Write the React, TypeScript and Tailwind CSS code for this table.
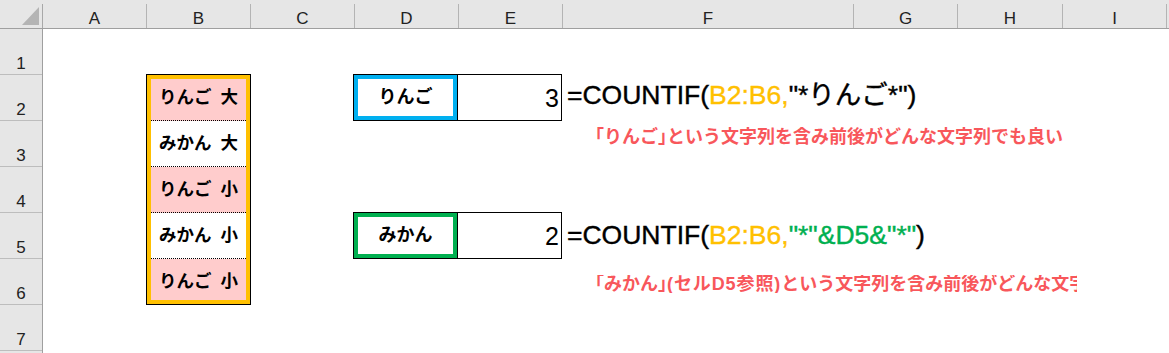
import React from 'react';

const LETTERS = ['A', 'B', 'C', 'D', 'E', 'F', 'G', 'H', 'I'];
const ROW_STARTS = ['row-start-2', 'row-start-3', 'row-start-4', 'row-start-5', 'row-start-6', 'row-start-7', 'row-start-8'];

const FRUITS = [
  { label: 'りんご 大', pink: true, pad: 'h-[42px] pb-[4px]' },
  { label: 'みかん 大', pink: false, pad: 'h-[46px]' },
  { label: 'りんご 小', pink: true, pad: 'h-[46px]' },
  { label: 'みかん 小', pink: false, pad: 'h-[46px]' },
  { label: 'りんご 小', pink: true, pad: 'flex-1 pt-[5px]' },
];

function LookupPair({ label, value, frame, row }: { label: string; value: number; frame: string; row: string }) {
  return (
    <div className={`${row} col-start-5 col-span-2 -ml-[2px] -mt-px flex justify-self-start`}>
      <div className="w-[105px] border border-black">
        <div className={`flex h-full items-center justify-center border-4 ${frame} text-[18px] font-bold`}>{label}</div>
      </div>
      <div className="flex w-[104px] items-center justify-end border-y border-r border-black pr-[2px] pt-[2px] text-[25px] leading-none">
        {value}
      </div>
    </div>
  );
}

// closing bracket drawn half-width, as in the sheet's font
const Close = () => <span className="[font-feature-settings:'halt']">」</span>;

export default function App() {
  return (
    <div className="grid h-screen w-full grid-cols-[43px_104px_104px_104px_104px_104px_291px_104px_105px_104px_1fr] grid-rows-[29px_repeat(7,46px)_1fr] overflow-hidden bg-white font-['Liberation_Sans','Noto_Sans_CJK_JP',sans-serif] text-black">
      {/* column headers */}
      <div className="row-start-1 flex border-b border-[#9f9f9f] bg-[#e6e6e6]">
        <svg className="flex-1" viewBox="0 0 42 28" width="42" height="28">
          <polygon points="22,25 39,25 39,7" fill="#b4b4b4" />
        </svg>
        <div className="mt-[4px] w-px bg-[#a8a8a8]" />
      </div>
      {LETTERS.map((l) => (
        <div key={l} className="row-start-1 flex border-b border-[#9f9f9f] bg-[#e6e6e6]">
          <div className="flex flex-1 items-end justify-center pb-[1px] text-[17px] leading-none text-[#222]">{l}</div>
          <div className="mt-[4px] w-px bg-[#b4b4b4]" />
        </div>
      ))}
      <div className="row-start-1 border-b border-[#9f9f9f] bg-[#e6e6e6]" />

      {/* row headers */}
      {ROW_STARTS.map((r, i) => (
        <div key={r} className={`${r} col-start-1 border-r border-[#9f9f9f] bg-[#e6e6e6]`}>
          <div className="flex h-full items-end justify-center border-b border-[#bdbdbd] pb-[2px] text-[17px] leading-none text-[#222]">
            {i + 1}
          </div>
        </div>
      ))}
      <div className="row-start-9 col-start-1 border-r border-[#9f9f9f] bg-[#e6e6e6]" />

      {/* B2:B6 list */}
      <div className="col-start-3 row-start-3 row-span-5 -ml-px -mt-px border border-black">
        <div className="flex h-full flex-col border-4 border-[#ffc000]">
          {FRUITS.map((f, i) => (
            <div
              key={i}
              className={`flex items-center justify-center ${f.pad} ${f.pink ? 'bg-[#ffcccc]' : 'bg-white'} ${i < 4 ? 'border-b border-dotted border-black' : ''} text-[17.5px] font-bold leading-none whitespace-nowrap [word-spacing:4px]`}
            >
              {f.label}
            </div>
          ))}
        </div>
      </div>

      {/* lookups */}
      <LookupPair row="row-start-3" label="りんご" value={3} frame="border-[#00b0f0]" />
      <LookupPair row="row-start-6" label="みかん" value={2} frame="border-[#00b050]" />

      {/* formulas */}
      <div className="col-start-7 row-start-3 flex items-center whitespace-nowrap pb-[6px] pl-[4px] text-[26.5px] leading-none [-webkit-text-stroke:0.4px_currentColor]">
        =COUNTIF(<span className="text-[#ffc000]">B2:B6,</span>"*りんご*")
      </div>
      <div className="col-start-7 col-span-4 row-start-4 whitespace-nowrap pl-[23px] pt-[7px] text-[18px] font-bold leading-none text-[#f8575b]">
        「りんご<Close />という文字列を含み前後がどんな文字列でも良い
      </div>

      <div className="col-start-7 row-start-6 flex items-center whitespace-nowrap pb-[2px] pl-[4px] text-[26.5px] leading-none [-webkit-text-stroke:0.4px_currentColor]">
        =COUNTIF(<span className="text-[#ffc000]">B2:B6,</span>
        <span className="text-[#00b050]">"*"&amp;D5&amp;"*"</span>)
      </div>
      <div className="col-start-7 col-span-4 row-start-7 pl-[23px] pt-[16px]">
        <div className="w-[491px] overflow-hidden whitespace-nowrap text-[18px] font-bold leading-none text-[#f8575b]">
          「みかん<Close /><span className="tracking-[0.9px]">(セルD5参照)</span>という文字列を含み前後がどんな文字列でも良い
        </div>
      </div>
    </div>
  );
}
